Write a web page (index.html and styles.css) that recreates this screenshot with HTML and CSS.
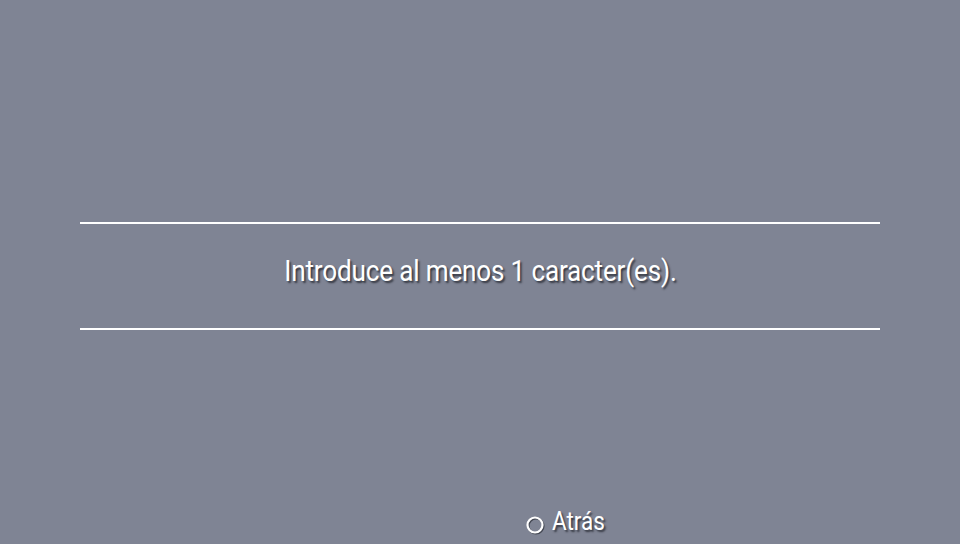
FILE: index.html
```html
<!DOCTYPE html>
<html>
<head>
<meta charset="utf-8">
<link rel="stylesheet" href="styles.css">
</head>
<body>
<div class="screen">
  <div class="spacer-top"></div>
  <div class="dialog">
    <div class="rule"></div>
    <div class="message"><span class="msg-text">Introduce al menos 1 caracter(es).</span></div>
    <div class="rule"></div>
  </div>
  <div class="footer">
    <div class="back">
      <svg class="circle-icon" width="20" height="20" viewBox="0 0 20 20">
        <circle cx="11" cy="11" r="7.5" fill="none" stroke="#2a2d36" stroke-opacity="0.7" stroke-width="2.2"/>
        <circle cx="10" cy="10" r="7.5" fill="none" stroke="#ffffff" stroke-width="2.2"/>
      </svg>
      <span class="back-text">Atrás</span>
    </div>
  </div>
</div>
</body>
</html>
```
FILE: styles.css
```css
html, body {
  margin: 0;
  padding: 0;
}
body {
  background: #7f8494;
  font-family: Roboto, "Liberation Sans", sans-serif;
}
.screen {
  width: 960px;
  height: 544px;
  display: flex;
  flex-direction: column;
  overflow: hidden;
}
.spacer-top {
  height: 222px;
}
.dialog {
  margin: 0 80px;
  display: flex;
  flex-direction: column;
}
.rule {
  height: 2px;
  background: #ffffff;
}
.message {
  height: 104px;
  display: flex;
  align-items: center;
  justify-content: center;
}
.msg-text {
  display: inline-block;
  color: #ffffff;
  font-size: 30px;
  letter-spacing: -0.2px;
  transform: scaleX(0.87);
  text-shadow: 2px 2px 2px rgba(30, 32, 40, 0.75);
  white-space: nowrap;
  margin-top: -12px;
}
.footer {
  flex: 1;
  display: flex;
  justify-content: center;
  align-items: flex-end;
  padding-bottom: 8px;
}
.back {
  display: flex;
  align-items: center;
  gap: 7px;
  margin-left: 176px;
}
.circle-icon {
  margin-top: 6px;
}
.back-text {
  display: inline-block;
  color: #ffffff;
  font-size: 25px;
  transform: scaleX(0.90);
  transform-origin: left center;
  text-shadow: 2px 2px 2px rgba(30, 32, 40, 0.75);
}
```
